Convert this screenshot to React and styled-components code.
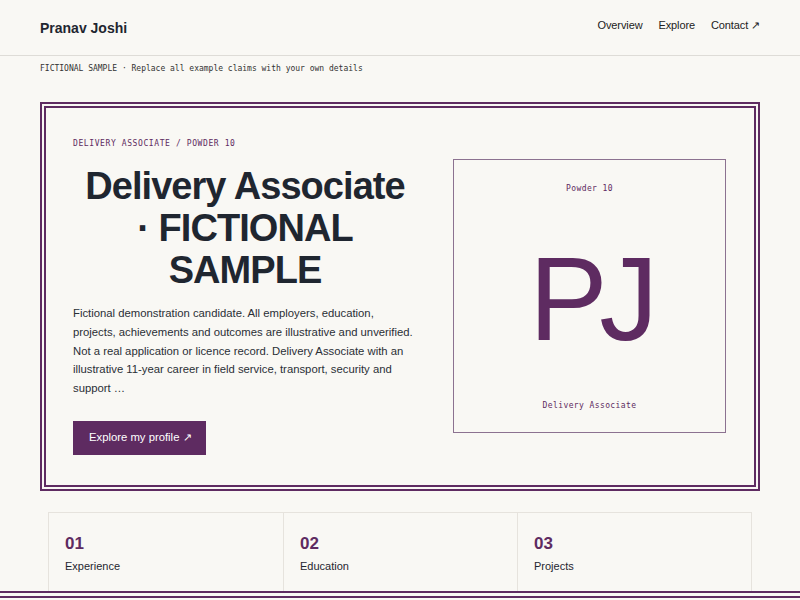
import React from 'react';
import styled, { createGlobalStyle } from 'styled-components';

const PURPLE = '#5e2b61';
const INK = '#1f2630';
const SANS = '"Liberation Sans", Arial, Helvetica, sans-serif';
const MONO = '"DejaVu Sans Mono", "Liberation Mono", monospace';

const GlobalStyle = createGlobalStyle`
  * { box-sizing: border-box; }
  body {
    margin: 0;
    background: #f9f8f4;
    color: ${INK};
    font-family: ${SANS};
  }
`;

const stats = [
  { num: '01', label: 'Experience' },
  { num: '02', label: 'Education' },
  { num: '03', label: 'Projects' },
];

const App = () => (
  <>
    <GlobalStyle />
    <Header>
      <Brand>Pranav Joshi</Brand>
      <Nav>
        <NavLink>Overview</NavLink>
        <NavLink>Explore</NavLink>
        <NavLink>Contact ↗</NavLink>
      </Nav>
    </Header>
    <Notice>FICTIONAL SAMPLE · Replace all example claims with your own details</Notice>
    <Main>
      <Hero>
        <HeroText>
          <Eyebrow>DELIVERY ASSOCIATE / POWDER 10</Eyebrow>
          <Title>Delivery Associate · FICTIONAL SAMPLE</Title>
          <Lead>
            Fictional demonstration candidate. All employers, education,
            projects, achievements and outcomes are illustrative and unverified.
            Not a real application or licence record. Delivery Associate with an
            illustrative 11-year career in field service, transport, security and
            support …
          </Lead>
          <CTA>Explore my profile ↗</CTA>
        </HeroText>
        <Card>
          <CardMeta>Powder 10</CardMeta>
          <Initials>PJ</Initials>
          <CardMeta>Delivery Associate</CardMeta>
        </Card>
      </Hero>
      <Stats>
        {stats.map((s) => (
          <Stat key={s.num}>
            <StatNum>{s.num}</StatNum>
            <StatLabel>{s.label}</StatLabel>
          </Stat>
        ))}
      </Stats>
    </Main>
    <Footer />
  </>
);

const Header = styled.header`
  display: flex;
  justify-content: space-between;
  align-items: center;
  height: 56px;
  padding: 0 40px 2px;
  border-bottom: 1px solid #dedcd7;
`;

const Brand = styled.div`
  font-size: 14px;
  font-weight: 700;
  color: ${INK};
  margin-top: 2px;
`;

const Nav = styled.nav`
  display: flex;
  gap: 16px;
  margin-bottom: 3px;
`;

const NavLink = styled.a`
  font-size: 11px;
  letter-spacing: -0.01em;
  color: #222;
  cursor: pointer;
`;

const Notice = styled.div`
  padding: 8px 40px 7px;
  font-family: ${MONO};
  font-size: 8px;
  color: #333;
`;

const Main = styled.main`
  padding: 22px 40px 0;
`;

const Hero = styled.section`
  display: grid;
  grid-template-columns: 1fr 273px;
  gap: 36px;
  align-items: center;
  padding: 29px 28px 30px 27px;
  border: 6px double ${PURPLE};
`;

const HeroText = styled.div`
  display: flex;
  flex-direction: column;
`;

const Eyebrow = styled.div`
  margin-top: 2px;
  font-family: ${MONO};
  font-size: 8px;
  letter-spacing: 0.6px;
  color: ${PURPLE};
`;

const Title = styled.h1`
  max-width: 334px;
  margin: 17px auto 13px;
  font-size: 38px;
  line-height: 42px;
  font-weight: 700;
  letter-spacing: -0.025em;
  text-align: center;
  color: ${INK};
`;

const Lead = styled.p`
  margin: 0;
  font-size: 11.3px;
  line-height: 18.75px;
  color: #2a2f36;
`;

const CTA = styled.button`
  align-self: flex-start;
  margin-top: 23px;
  height: 34px;
  padding: 0 14px 0 16px;
  border: 0;
  background: ${PURPLE};
  color: #fff;
  font-family: ${SANS};
  font-size: 11.3px;
  cursor: pointer;
`;

const Card = styled.div`
  display: flex;
  flex-direction: column;
  justify-content: space-between;
  align-items: center;
  height: 274px;
  padding: 24px 0 22px;
  border: 1px solid #8c7290;
`;

const CardMeta = styled.div`
  font-family: ${MONO};
  font-size: 8px;
  letter-spacing: 0.4px;
  color: ${PURPLE};
`;

const Initials = styled.div`
  font-size: 118px;
  line-height: 1;
  letter-spacing: -0.07em;
  color: ${PURPLE};
  margin-top: 4px;
`;

const Stats = styled.div`
  display: grid;
  grid-template-columns: repeat(3, 1fr);
  margin: 21px 8px 0;
  border: 1px solid #e6e3dd;
  border-bottom: 0;
`;

const Stat = styled.div`
  padding: 21px 16px 19px;
  border-left: 1px solid #e6e3dd;
  &:first-child { border-left: 0; }
`;

const StatNum = styled.div`
  font-size: 17px;
  font-weight: 700;
  color: ${PURPLE};
`;

const StatLabel = styled.div`
  margin-top: 6px;
  font-size: 11px;
  color: ${INK};
`;

const Footer = styled.footer`
  border-top: 7px double ${PURPLE};
`;

export default App;
